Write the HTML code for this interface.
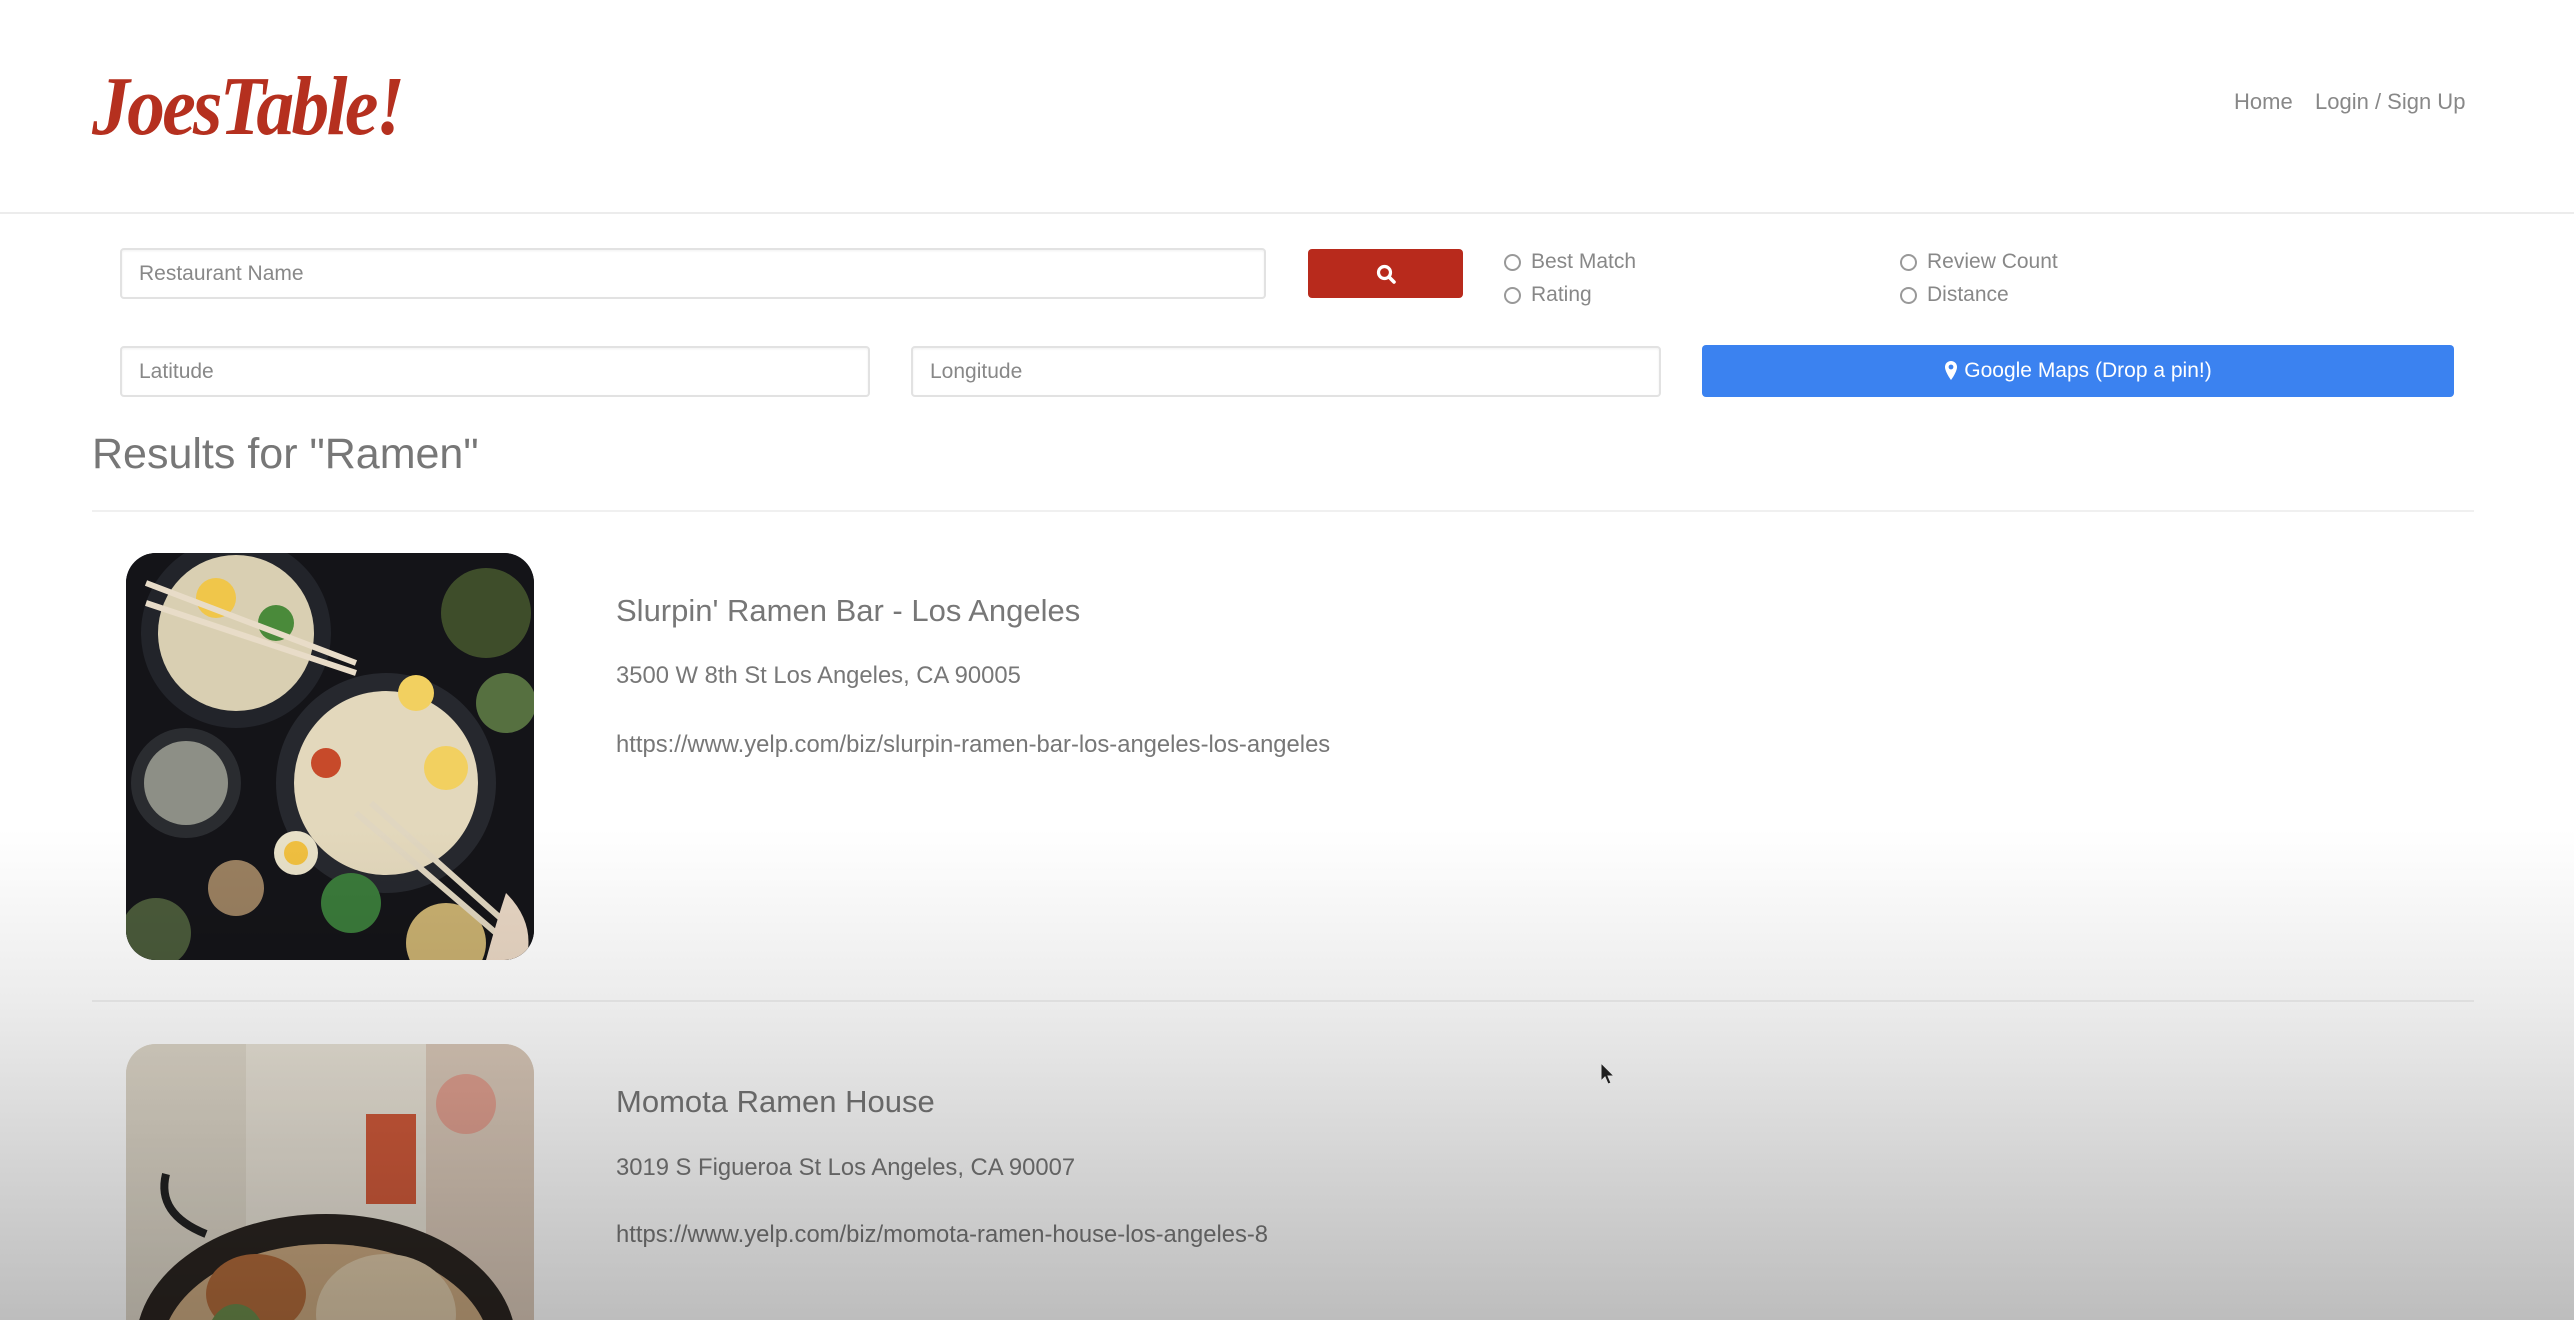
<!DOCTYPE html>
<html><head><meta charset="utf-8"><style>
*{box-sizing:border-box;margin:0;padding:0}
html{width:2574px;height:1320px;overflow:hidden}
body{width:2574px;height:1320px;overflow:hidden;background:#fff;font-family:"Liberation Sans",Arial,sans-serif;position:relative;color:#777}
.a{position:absolute}
.logo{left:92px;top:58px;font-family:"Liberation Serif",serif;font-style:italic;font-weight:bold;font-size:84px;color:#b5301f;letter-spacing:-3px;transform:scaleX(.9);transform-origin:left}
.nav{top:89px;font-size:22px;color:#888}
.hline{left:0;top:212px;width:2574px;height:2px;background:#ececec}
.inp{border:2px solid #e2e2e2;border-radius:4px;background:#fff;font-size:21px;color:#888;padding-left:17px;display:flex;align-items:center;box-shadow:inset 0 1px 2px rgba(0,0,0,.06)}
.btn{border-radius:4px;display:flex;align-items:center;justify-content:center;color:#fff;font-size:21px}
.rad{font-size:21px;color:#888;display:flex;align-items:center}
.rad i{display:inline-block;width:17px;height:17px;border:2px solid #999;border-radius:50%;margin-right:10px}
.hr{left:92px;width:2382px;height:2px;background:#f0f0f0}
.t{font-size:31px;color:#777}
.s{font-size:23.8px;color:#777}
.img{left:126px;width:408px;border-radius:30px;overflow:hidden}
.shade{left:0;top:0;width:2574px;height:1320px;pointer-events:none;mix-blend-mode:multiply;background:linear-gradient(to bottom,#fff 0,#fff 830px,#ececec 1000px,#d6d6d6 1150px,#bdbdbd 1320px)}
</style></head><body>
<div class="a logo">JoesTable!</div>
<div class="a nav" style="left:2234px">Home</div>
<div class="a nav" style="left:2315px">Login / Sign Up</div>
<div class="a hline"></div>

<div class="a inp" style="left:120px;top:248px;width:1146px;height:51px">Restaurant Name</div>
<div class="a btn" style="left:1308px;top:249px;width:155px;height:49px;background:#b82a1c">
<svg width="22" height="22" viewBox="0 0 22 22"><circle cx="9.5" cy="9.5" r="6" fill="none" stroke="#fff" stroke-width="3.2"/><path d="M14 14l5 5" stroke="#fff" stroke-width="3.6" stroke-linecap="round"/></svg></div>
<div class="a rad" style="left:1504px;top:250px"><i></i>Best Match</div>
<div class="a rad" style="left:1504px;top:283px"><i></i>Rating</div>
<div class="a rad" style="left:1900px;top:250px"><i></i>Review Count</div>
<div class="a rad" style="left:1900px;top:283px"><i></i>Distance</div>

<div class="a inp" style="left:120px;top:346px;width:750px;height:51px">Latitude</div>
<div class="a inp" style="left:911px;top:346px;width:750px;height:51px">Longitude</div>
<div class="a btn" style="left:1702px;top:345px;width:752px;height:52px;background:#3b82f0">
<svg width="14" height="22" viewBox="0 0 14 22" style="margin-right:6px"><path d="M7 1a6 6 0 0 0-6 6c0 5 6 13 6 13s6-8 6-13a6 6 0 0 0-6-6z" fill="#fff"/><circle cx="7" cy="7" r="2.4" fill="#3b82f0"/></svg>Google Maps (Drop a pin!)</div>

<div class="a" style="left:92px;top:430px;font-size:43px;color:#777">Results for "Ramen"</div>
<div class="a hr" style="top:510px"></div>

<div class="a img" style="top:553px;height:407px;background:#16161a">
<svg width="408" height="407" viewBox="0 0 408 407">
<rect width="408" height="407" fill="#141418"/>
<circle cx="110" cy="80" r="95" fill="#22242a"/><circle cx="110" cy="80" r="78" fill="#d9cfb2"/>
<circle cx="90" cy="45" r="20" fill="#f0c64a"/><circle cx="150" cy="70" r="18" fill="#4a8a3a"/>
<circle cx="260" cy="230" r="110" fill="#26282e"/><circle cx="260" cy="230" r="92" fill="#e3d8bc"/>
<circle cx="320" cy="215" r="22" fill="#f2d060"/><circle cx="290" cy="140" r="18" fill="#f2d060"/>
<circle cx="200" cy="210" r="15" fill="#c74a2a"/>
<circle cx="60" cy="230" r="55" fill="#2a2c30"/><circle cx="60" cy="230" r="42" fill="#8d8f86"/>
<circle cx="170" cy="300" r="22" fill="#e8e1c8"/><circle cx="170" cy="300" r="12" fill="#f0c040"/>
<circle cx="110" cy="335" r="28" fill="#9a8060"/><circle cx="225" cy="350" r="30" fill="#3a7a3a"/>
<circle cx="320" cy="390" r="40" fill="#c9b070"/><circle cx="360" cy="60" r="45" fill="#3e4d2a"/>
<circle cx="380" cy="150" r="30" fill="#567040"/><circle cx="30" cy="380" r="35" fill="#4a5a3a"/>
<path d="M20 30L230 110M20 50L230 120" stroke="#e8dcc8" stroke-width="6"/>
<path d="M230 260L370 380M245 250L380 370" stroke="#e0d6c0" stroke-width="6"/>
<path d="M380 340Q410 370 400 407L360 407Q370 370 380 340z" fill="#e9d7c4"/>
</svg></div>
<div class="a t" style="left:616px;top:593px">Slurpin' Ramen Bar - Los Angeles</div>
<div class="a s" style="left:616px;top:662px">3500 W 8th St Los Angeles, CA 90005</div>
<div class="a s" style="left:616px;top:731px">https://www.yelp.com/biz/slurpin-ramen-bar-los-angeles-los-angeles</div>

<div class="a hr" style="top:1000px"></div>

<div class="a img" style="top:1044px;height:276px;border-radius:30px 30px 0 0;background:#e6e0d4">
<svg width="408" height="276" viewBox="0 0 408 276">
<rect width="408" height="276" fill="#e8e2d6"/>
<rect x="0" y="0" width="120" height="276" fill="#ddd6c8"/>
<rect x="300" y="0" width="108" height="276" fill="#d9c8b8"/>
<rect x="240" y="70" width="50" height="90" fill="#d05a3a"/>
<circle cx="340" cy="60" r="30" fill="#e0a090"/>
<ellipse cx="200" cy="300" rx="190" ry="130" fill="#2a2420"/>
<ellipse cx="200" cy="310" rx="165" ry="110" fill="#c9a880"/>
<ellipse cx="130" cy="250" rx="50" ry="40" fill="#b06a3a"/>
<ellipse cx="260" cy="270" rx="70" ry="60" fill="#dcc8a8"/>
<ellipse cx="110" cy="300" rx="30" ry="40" fill="#6a8a4a"/>
<path d="M40 130Q30 170 80 190" stroke="#222" stroke-width="8" fill="none"/>
</svg></div>
<div class="a t" style="left:616px;top:1084px">Momota Ramen House</div>
<div class="a s" style="left:616px;top:1154px">3019 S Figueroa St Los Angeles, CA 90007</div>
<div class="a s" style="left:616px;top:1221px">https://www.yelp.com/biz/momota-ramen-house-los-angeles-8</div>

<svg class="a" style="left:1600px;top:1062px" width="16" height="24" viewBox="0 0 16 24"><path d="M1 1v18l4-4 3 7 3-1-3-7h6z" fill="#222" stroke="#fff" stroke-width="1"/></svg>

<div class="a shade"></div>
</body></html>
